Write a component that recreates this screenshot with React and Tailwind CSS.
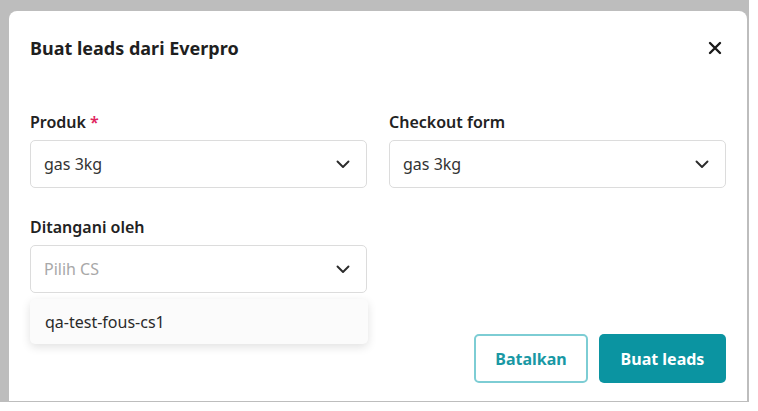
import React from "react";

function Chevron() {
  return (
    <svg width="14" height="9" viewBox="0 0 14 9" fill="none" className="shrink-0">
      <path d="M1.5 1.5L7 7L12.5 1.5" stroke="#2b2b2b" strokeWidth="1.9" strokeLinecap="round" strokeLinejoin="round" />
    </svg>
  );
}

function Select({ value, placeholder }) {
  return (
    <div className="h-[48px] w-full border border-[#dcdcdc] rounded-[5px] bg-white flex items-center justify-between pl-[13px] pr-[16px]">
      {value ? (
        <span className="text-[16px] text-[#333333]">{value}</span>
      ) : (
        <span className="text-[16px] text-[#a8a8a8]">{placeholder}</span>
      )}
      <Chevron />
    </div>
  );
}

function Label({ children, required }) {
  return (
    <div className="text-[16px] font-semibold text-[#222222] leading-[20px] mb-[8px]">
      {children}
      {required && <span className="text-[#e0245e] ml-[4px]">*</span>}
    </div>
  );
}

export default function App() {
  return (
    <div className="w-[758px] h-[411px] bg-white overflow-hidden" style={{ fontFamily: "'Noto Sans', sans-serif" }}>
      <div className="w-[749px] h-[402px] bg-[#bdbdbd] pl-[9px] pt-[11px] pr-[2px] pb-[1px]">
        <div className="w-full h-full bg-white rounded-t-[8px] px-[21px] pt-[24px] flex flex-col">
          <div className="flex items-center justify-between h-[26px]">
            <h1 className="text-[18px] font-bold text-[#1f1f1f]">Buat leads dari Everpro</h1>
            <svg width="14" height="14" viewBox="0 0 14 14" className="mr-[4px]">
              <path d="M2 2L12 12M12 2L2 12" stroke="#1a1a1a" strokeWidth="2.4" strokeLinecap="round" />
            </svg>
          </div>
          <div className="grid grid-cols-2 gap-x-[22px] mt-[51px]">
            <div>
              <Label required>Produk</Label>
              <Select value="gas 3kg" />
            </div>
            <div>
              <Label>Checkout form</Label>
              <Select value="gas 3kg" />
            </div>
            <div className="mt-[29px] relative">
              <Label>Ditangani oleh</Label>
              <Select placeholder="Pilih CS" />
              <div className="absolute left-0 right-[-1px] top-[82px] h-[45px] bg-[#fbfbfb] rounded-[5px] shadow-[0_3px_10px_rgba(0,0,0,0.12)] flex items-center pl-[15px] z-10">
                <span className="text-[16px] text-[#2a2a2a]">qa-test-fous-cs1</span>
              </div>
            </div>
          </div>
          <div className="flex justify-end gap-[11px] mt-[41px]">
            <button className="w-[114px] h-[49px] rounded-[5px] border-2 border-[#7dcdd4] text-[#1998a4] text-[16px] font-bold bg-white">Batalkan</button>
            <button className="w-[127px] h-[49px] rounded-[5px] bg-[#0b94a1] text-white text-[16px] font-bold">Buat leads</button>
          </div>
        </div>
      </div>
    </div>
  );
}
